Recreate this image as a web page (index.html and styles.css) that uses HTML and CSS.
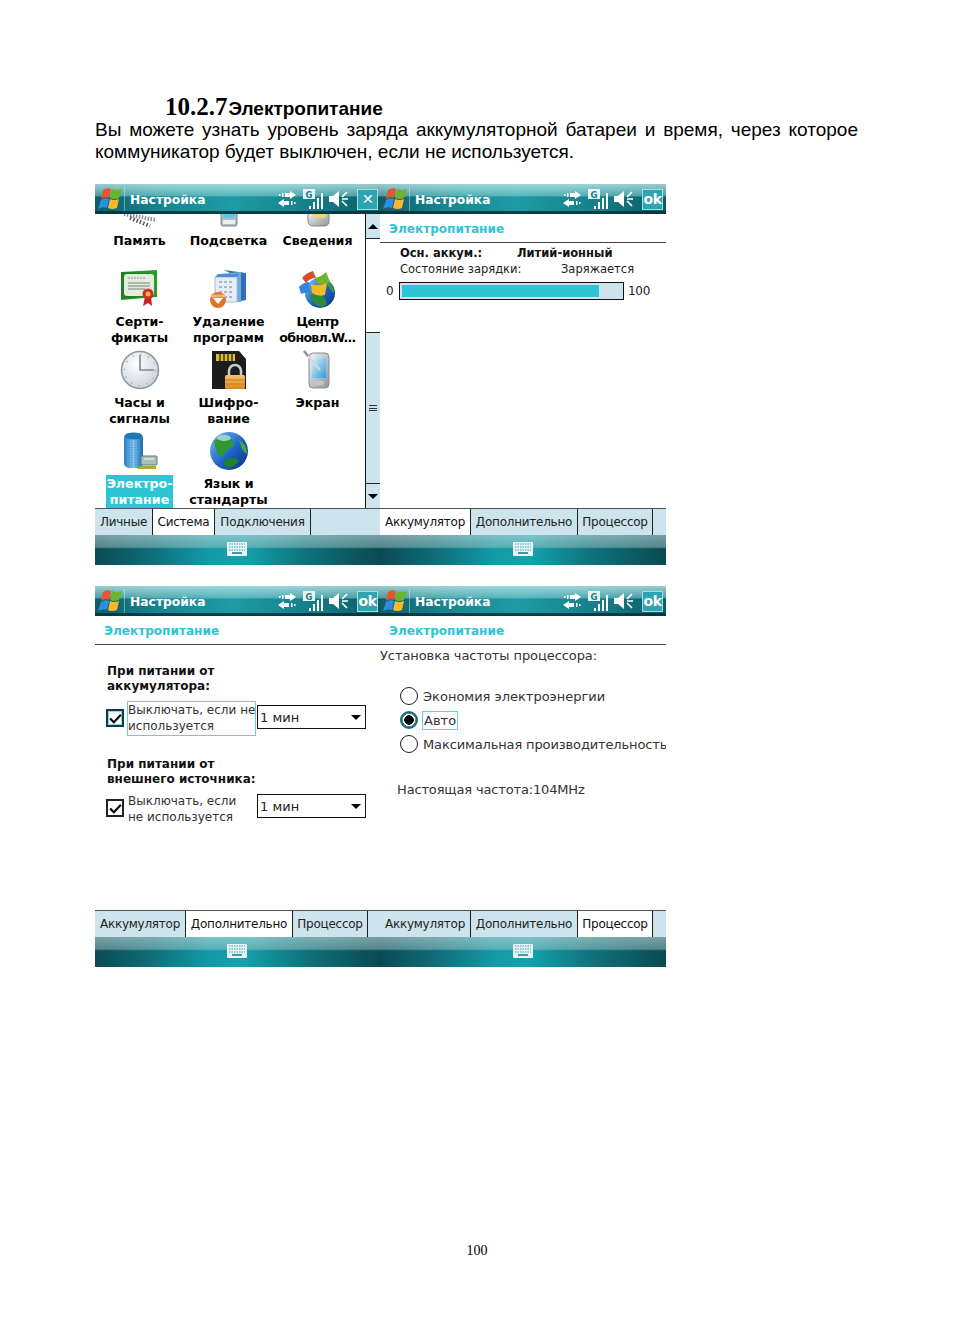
FILE: index.html
```html
<!DOCTYPE html>
<html lang="ru">
<head>
<meta charset="utf-8">
<title>Электропитание</title>
<link rel="stylesheet" href="styles.css">
</head>
<body>
<svg class="defs" aria-hidden="true">
  <defs>
    <linearGradient id="gGlobe" x1="0" y1="0" x2="1" y2="1"><stop offset="0" stop-color="#7cc0f0"/><stop offset=".55" stop-color="#1c62c4"/><stop offset="1" stop-color="#0b2e78"/></linearGradient>
    <linearGradient id="gMetal" x1="0" y1="0" x2="1" y2="1"><stop offset="0" stop-color="#f4f4f4"/><stop offset="1" stop-color="#8f959b"/></linearGradient>
    <linearGradient id="gBlue" x1="0" y1="0" x2="1" y2="0"><stop offset="0" stop-color="#2f7fc9"/><stop offset=".5" stop-color="#7fc6f2"/><stop offset="1" stop-color="#1e68ae"/></linearGradient>
    <linearGradient id="gLock" x1="0" y1="0" x2="0" y2="1"><stop offset="0" stop-color="#f6c46a"/><stop offset="1" stop-color="#de8420"/></linearGradient>
    <linearGradient id="gScreen" x1="0" y1="0" x2="1" y2="1"><stop offset="0" stop-color="#d9f3ff"/><stop offset="1" stop-color="#2f9ae0"/></linearGradient>
    <radialGradient id="gClock" cx=".4" cy=".35" r=".8"><stop offset="0" stop-color="#ffffff"/><stop offset="1" stop-color="#c2cbd3"/></radialGradient>

    <symbol id="i-win" viewBox="0 0 24 24">
      <path d="M5 3Q9 0 13 2L11 11Q7 9 3 12Z" fill="#e8552a"/>
      <path d="M14 2Q18 4 24 2L21 11Q16 13 12 11Z" fill="#6ab42e"/>
      <path d="M3 13Q7 10 11 12L9 21Q5 19 0 22Z" fill="#2a8fe0"/>
      <path d="M12 12Q16 14 21 12L19 21Q14 23 10 21Z" fill="#f7b92b"/>
    </symbol>
    <symbol id="i-sync" viewBox="0 0 18 16">
      <path d="M7 2H12V0L18 4 12 8V6H7Z" fill="#fff"/>
      <path d="M4 2H5.500V6H4ZM1 3H2.500V5H1Z" fill="#fff"/>
      <path d="M11 10H6V8L0 12 6 16V14H11Z" fill="#fff"/>
      <path d="M13 10H14.500V14H13ZM16 11H17.500V13H16Z" fill="#fff"/>
    </symbol>
    <symbol id="i-signal" viewBox="0 0 20 20">
      <rect x="0" y="0" width="12" height="10" fill="#e9f5f6"/>
      <text x="6" y="8.500" class="g-text">G</text>
      <path d="M6 17H8V20H6ZM10 13H12V20H10ZM14 9H16V20H14ZM18 4H20V20H18Z" fill="#fff"/>
    </symbol>
    <symbol id="i-speaker" viewBox="0 0 20 16">
      <path d="M0 5H4L10 0V16L4 11H0Z" fill="#fff"/>
      <path d="M18 1L13 6M13 8H19M18 15L13 10" stroke="#fff" stroke-width="1.700" fill="none"/>
    </symbol>
    <symbol id="i-kbd" viewBox="0 0 20 14">
      <rect width="20" height="14" rx="1" fill="#e8f6f7"/>
      <path d="M2 2H18M2 5H18M2 8H18" stroke="#3f9aa2" stroke-width="1" stroke-dasharray="1.500 1"/>
      <rect x="5" y="10" width="10" height="2" fill="#3f9aa2"/>
    </symbol>

    <symbol id="i-memory" viewBox="0 0 40 40">
      <path d="M4 26L36 32" stroke="#8d8d8d" stroke-width="4" stroke-dasharray="1.500 1.500"/>
      <path d="M10 30L30 38" stroke="#555" stroke-width="4" stroke-dasharray="1.500 2"/>
    </symbol>
    <symbol id="i-light" viewBox="0 0 40 40">
      <rect x="12" y="24" width="16" height="14" rx="2" fill="#b6bcc2" stroke="#7d858c"/>
      <rect x="14" y="24" width="12" height="6" fill="#5cc6ef"/>
      <rect x="14" y="32" width="12" height="4" fill="#eceff1"/>
    </symbol>
    <symbol id="i-info" viewBox="0 0 40 40">
      <path d="M10 24H31V33Q31 38 26 38H16Q10 38 10 33Z" fill="url(#gMetal)" stroke="#80878d"/>
      <path d="M15 24H28V29Q21 32 15 28Z" fill="#f1d76b"/>
    </symbol>
    <symbol id="i-cert" viewBox="0 0 40 40">
      <path d="M1 3L37 1V28L1 31Z" fill="#2e9a2e"/>
      <path d="M1 3L30 4V27L1 30Z" fill="#1f7f22"/>
      <rect x="4" y="5" width="30" height="22" rx="3" fill="#e6ecdd"/>
      <path d="M8 9H26" stroke="#a8b2a8" stroke-width="1.500" stroke-dasharray="2 1"/>
      <path d="M8 14H30M8 17H30M8 20H25" stroke="#9aa49c" stroke-width="1.400"/>
      <path d="M25 28L23 37 28 34 32 37 31 28Z" fill="#c81e24"/>
      <circle cx="28" cy="25" r="5.500" fill="#d8262a"/>
      <circle cx="28" cy="25" r="2.500" fill="#f3c53c"/>
    </symbol>
    <symbol id="i-uninstall" viewBox="0 0 40 40">
      <path d="M15 1L37 4V31L27 33V7Z" fill="#2f6fb8"/>
      <path d="M10 5L32 3V33L10 33Z" fill="#6fa9e0"/>
      <path d="M6 8H28V33H6Z" fill="#e6edf5" stroke="#a9bdd3"/>
      <path d="M6 8L9 5H30L28 8Z" fill="#4a8ed6"/>
      <path d="M10 13H24M10 18H24M10 23H24M10 28H24" stroke="#a8b9cc" stroke-width="2" stroke-dasharray="3 2"/>
      <circle cx="9" cy="31" r="8" fill="#e0742a"/>
      <path d="M2 27H16" stroke="#f6b078" stroke-width="3"/>
      <path d="M4 29H14L9 35Z" fill="#fff"/>
    </symbol>
    <symbol id="i-update" viewBox="0 0 40 40">
      <circle cx="22" cy="24" r="15" fill="url(#gGlobe)"/>
      <path d="M12 26Q20 20 26 28T24 38Q14 36 12 26Z" fill="#2c8a3a"/>
      <path d="M28 12Q36 14 36 24 32 22 28 12Z" fill="#38973f"/>
      <path d="M4 9Q8 4 15 2L18 9Q12 9 8 14Z" fill="#d84e24"/>
      <path d="M17 9Q23 8 28 3L32 13Q26 17 20 15Z" fill="#6eb52f"/>
      <path d="M1 18Q6 13 11 13L12 24Q7 23 3 25Z" fill="#2f86de"/>
      <path d="M13 15Q20 18 29 14L27 26Q20 28 14 24Z" fill="#f5b92a"/>
    </symbol>
    <symbol id="i-clock" viewBox="0 0 40 40">
      <circle cx="20" cy="20" r="18.500" fill="url(#gClock)" stroke="#8a949d" stroke-width="1.500"/>
      <circle cx="20" cy="20" r="15.500" fill="none" stroke="#96a1ab" stroke-width="1.500" stroke-dasharray="1 7.100"/>
      <path d="M20 5V20H34" stroke="#7c8790" stroke-width="1.600" fill="none"/>
    </symbol>
    <symbol id="i-sd" viewBox="0 0 40 40">
      <path d="M3 1H30L37 9V39H3Z" fill="#1c1c1c"/>
      <path d="M7 4H26V11H7Z" fill="#e4b92c"/>
      <path d="M11 4V11M15 4V11M19 4V11M23 4V11" stroke="#222" stroke-width="1.300"/>
      <path d="M20 26V21A6 6 0 0 1 32 21V26" fill="none" stroke="#c9cdd1" stroke-width="2.500"/>
      <rect x="16" y="25" width="20" height="14" rx="1.500" fill="url(#gLock)"/>
      <path d="M16 30H36M16 34H36" stroke="#c97a20" stroke-width="1"/>
    </symbol>
    <symbol id="i-screen" viewBox="0 0 40 40">
      <rect x="11" y="3" width="20" height="35" rx="4" fill="url(#gMetal)" stroke="#868d93"/>
      <rect x="14" y="8" width="14" height="20" fill="url(#gScreen)"/>
      <rect x="16" y="31" width="10" height="4" rx="1.500" fill="#c2c8cd"/>
      <path d="M6 1L22 20" stroke="#d4d8db" stroke-width="2.400"/>
      <path d="M6 1L10 6" stroke="#8d9398" stroke-width="2.400"/>
    </symbol>
    <symbol id="i-battery" viewBox="0 0 40 40">
      <rect x="4" y="2" width="19" height="35" rx="5" fill="url(#gBlue)"/>
      <ellipse cx="13.500" cy="5" rx="8.500" ry="3.500" fill="#1d78b8"/>
      <path d="M6 8V35M9 6V37M12 6V38M15 6V38M18 6V37M21 8V35" stroke="#0f5c9e" stroke-opacity=".45" stroke-dasharray="1 1.500"/>
      <rect x="21" y="25" width="16" height="9" rx="1" fill="#a8c0b8" stroke="#5d7b78"/>
      <path d="M24 28H34" stroke="#fff"/>
      <path d="M17 38L36 38 36 35 20 35Z" fill="#b7a23c"/>
    </symbol>
    <symbol id="i-globe" viewBox="0 0 40 40">
      <circle cx="20" cy="20" r="19" fill="url(#gGlobe)"/>
      <path d="M5 10Q14 3 20 7T24 16Q15 19 14 26 8 26 5 10Z" fill="#2f9a34"/>
      <path d="M30 9Q38 13 38 23 33 21 30 9Z" fill="#43a843"/>
      <path d="M15 29Q24 24 30 30 24 38 16 36Z" fill="#1f8230"/>
      <ellipse cx="15" cy="7" rx="7" ry="3" fill="#c7e8fb" fill-opacity=".7"/>
    </symbol>
  </defs>
</svg>

<main class="page">
  <h1 class="heading"><span class="heading-num">10.2.7</span><span class="heading-text">Электропитание</span></h1>
  <p class="intro">Вы можете узнать уровень заряда аккумуляторной батареи и время, через которое коммуникатор будет выключен, если не используется.</p>

  <section class="screens">
    <!-- Screen 1 -->
    <article class="screen">
      <header class="titlebar">
        <svg class="tb-win"><use href="#i-win"/></svg><span class="tb-title">Настройка</span>
        <svg class="tb-sync"><use href="#i-sync"/></svg><svg class="tb-signal"><use href="#i-signal"/></svg><svg class="tb-speaker"><use href="#i-speaker"/></svg>
        <span class="tb-btn tb-x">✕</span>
      </header>
      <div class="split">
        <div class="apps">
          <div class="app"><svg class="app-icon"><use href="#i-memory"/></svg><span class="app-label">Память</span></div>
          <div class="app"><svg class="app-icon"><use href="#i-light"/></svg><span class="app-label">Подсветка</span></div>
          <div class="app"><svg class="app-icon"><use href="#i-info"/></svg><span class="app-label">Сведения</span></div>
          <div class="app"><svg class="app-icon"><use href="#i-cert"/></svg><span class="app-label">Серти-<br>фикаты</span></div>
          <div class="app"><svg class="app-icon"><use href="#i-uninstall"/></svg><span class="app-label">Удаление<br>программ</span></div>
          <div class="app"><svg class="app-icon"><use href="#i-update"/></svg><span class="app-label app-label-tight">Центр<br>обновл.W...</span></div>
          <div class="app"><svg class="app-icon"><use href="#i-clock"/></svg><span class="app-label">Часы и<br>сигналы</span></div>
          <div class="app"><svg class="app-icon"><use href="#i-sd"/></svg><span class="app-label">Шифро-<br>вание</span></div>
          <div class="app"><svg class="app-icon"><use href="#i-screen"/></svg><span class="app-label">Экран</span></div>
          <div class="app"><svg class="app-icon"><use href="#i-battery"/></svg><span class="app-label app-label-on">Электро-<br>питание</span></div>
          <div class="app"><svg class="app-icon"><use href="#i-globe"/></svg><span class="app-label">Язык и<br>стандарты</span></div>
        </div>
        <div class="scrollbar">
          <span class="sb-btn"><span class="arrow-up"></span></span>
          <span class="sb-track"></span>
          <span class="sb-thumb"><span class="sb-grip"></span></span>
          <span class="sb-btn"><span class="arrow-down"></span></span>
        </div>
      </div>
      <nav class="tabs">
        <span class="tab tab-w58">Личные</span><span class="tab tab-w62 tab-on">Система</span><span class="tab tab-w96">Подключения</span>
      </nav>
      <footer class="softbar"><svg class="kbd"><use href="#i-kbd"/></svg></footer>
    </article>

    <!-- Screen 2 -->
    <article class="screen">
      <header class="titlebar">
        <svg class="tb-win"><use href="#i-win"/></svg><span class="tb-title">Настройка</span>
        <svg class="tb-sync"><use href="#i-sync"/></svg><svg class="tb-signal"><use href="#i-signal"/></svg><svg class="tb-speaker"><use href="#i-speaker"/></svg>
        <span class="tb-btn">ok</span>
      </header>
      <div class="pane">
        <h2 class="pane-head">Электропитание</h2>
        <dl class="bat-info">
          <dt class="bat-b">Осн. аккум.:</dt><dd class="bat-b">Литий-ионный</dd>
          <dt class="bat-k2">Состояние зарядки:</dt><dd class="bat-v2">Заряжается</dd>
        </dl>
        <div class="bat-row">
          <span class="bat-min">0</span>
          <span class="bat-bar"><span class="bat-fill"></span></span>
          <span class="bat-max">100</span>
        </div>
      </div>
      <nav class="tabs">
        <span class="tab tab-w91 tab-on">Аккумулятор</span><span class="tab tab-w107">Дополнительно</span><span class="tab tab-w75">Процессор</span>
      </nav>
      <footer class="softbar"><svg class="kbd"><use href="#i-kbd"/></svg></footer>
    </article>

    <!-- Screen 3 -->
    <article class="screen">
      <header class="titlebar">
        <svg class="tb-win"><use href="#i-win"/></svg><span class="tb-title">Настройка</span>
        <svg class="tb-sync"><use href="#i-sync"/></svg><svg class="tb-signal"><use href="#i-signal"/></svg><svg class="tb-speaker"><use href="#i-speaker"/></svg>
        <span class="tb-btn">ok</span>
      </header>
      <div class="pane">
        <h2 class="pane-head">Электропитание</h2>
        <h3 class="sec sec-a">При питании от<br>аккумулятора:</h3>
        <div class="opt opt-a">
          <span class="check check-on"><svg class="tick" viewBox="0 0 12 10"><path d="M1 5L4.500 8.500 11 1.500" fill="none" stroke="#000" stroke-width="2"/></svg></span>
          <span class="opt-text opt-focus">Выключать, если не<br>используется</span>
          <span class="select">1 мин<span class="arrow-down"></span></span>
        </div>
        <h3 class="sec sec-b">При питании от<br>внешнего источника:</h3>
        <div class="opt opt-b">
          <span class="check"><svg class="tick" viewBox="0 0 12 10"><path d="M1 5L4.500 8.500 11 1.500" fill="none" stroke="#000" stroke-width="2"/></svg></span>
          <span class="opt-text">Выключать, если<br>не используется</span>
          <span class="select">1 мин<span class="arrow-down"></span></span>
        </div>
      </div>
      <nav class="tabs">
        <span class="tab tab-w91">Аккумулятор</span><span class="tab tab-w107 tab-on">Дополнительно</span><span class="tab tab-w75">Процессор</span>
      </nav>
      <footer class="softbar"><svg class="kbd"><use href="#i-kbd"/></svg></footer>
    </article>

    <!-- Screen 4 -->
    <article class="screen">
      <header class="titlebar">
        <svg class="tb-win"><use href="#i-win"/></svg><span class="tb-title">Настройка</span>
        <svg class="tb-sync"><use href="#i-sync"/></svg><svg class="tb-signal"><use href="#i-signal"/></svg><svg class="tb-speaker"><use href="#i-speaker"/></svg>
        <span class="tb-btn">ok</span>
      </header>
      <div class="pane">
        <h2 class="pane-head">Электропитание</h2>
        <p class="cpu-title">Установка частоты процессора:</p>
        <ul class="radios">
          <li class="radio-row"><span class="radio"></span><span class="radio-text">Экономия электроэнергии</span></li>
          <li class="radio-row"><span class="radio radio-on"></span><span class="radio-text radio-focus">Авто</span></li>
          <li class="radio-row"><span class="radio"></span><span class="radio-text radio-long">Максимальная производительность</span></li>
        </ul>
        <p class="cpu-now">Настоящая частота:104MHz</p>
      </div>
      <nav class="tabs">
        <span class="tab tab-w91">Аккумулятор</span><span class="tab tab-w107">Дополнительно</span><span class="tab tab-w75 tab-on">Процессор</span>
      </nav>
      <footer class="softbar"><svg class="kbd"><use href="#i-kbd"/></svg></footer>
    </article>
  </section>

  <footer class="page-num">100</footer>
</main>
</body>
</html>
```
FILE: styles.css
```css
* { box-sizing: border-box; }
html, body { margin: 0; padding: 0; background: #fff; }
.defs { width: 0; height: 0; display: block; overflow: hidden; }

.page {
  height: 1339px;
  padding: 94px 96px 0 95px;
  color: #000;
  font-family: "Liberation Sans", Arial, sans-serif;
  display: flex;
  flex-direction: column;
  overflow: hidden;
}
.heading { margin: 0 0 0 70px; height: 25px; display: flex; align-items: baseline; line-height: 25px; }
.heading-num { font: bold 25px/25px "Liberation Serif", "Times New Roman", serif; }
.heading-text { font-size: 19px; font-weight: bold; margin-left: 1px; }
.intro {
  margin: 0;
  font-size: 19px;
  line-height: 22px;
  text-align: justify;
  height: 44px;
}

.screens {
  margin-top: 21px;
  display: grid;
  grid-template-columns: 285px 286px;
  grid-auto-rows: 381px;
  row-gap: 21px;
}
.screen {
  display: grid;
  grid-template-rows: 30px 294px 27px 30px;
  width: 100%;
  height: 381px;
  overflow: hidden;
  font-family: "DejaVu Sans", Verdana, sans-serif;
  font-size: 12px;
}

/* Title bar */
.titlebar {
  display: flex;
  align-items: center;
  position: relative;
  color: #fff;
  background:
    linear-gradient(180deg, rgba(190,232,234,.8) 0, rgba(130,205,210,.55) 40%, rgba(0,0,0,0) 43%, rgba(0,0,0,0) 90%, rgba(4,50,58,.85) 90%, rgba(4,50,58,.85) 100%),
    linear-gradient(90deg, #0e5c68 0, #17858f 22%, #1f9ba5 48%, #16808a 75%, #0c5a64 100%);
}
.tb-win { width: 26px; height: 24px; margin-left: 2px; flex: none; }
.tb-title {
  margin-left: 1px;
  padding-left: 5px;
  border-left: 1px solid rgba(210,240,240,.45);
  font-weight: bold;
  font-size: 12.300px;
  line-height: 26px;
  height: 24px;
  width: 150px;
  flex: none;
  white-space: nowrap;
}
.tb-sync { width: 18px; height: 16px; margin-left: 4px; flex: none; }
.tb-signal { width: 20px; height: 20px; margin: -1px 0 0 7px; flex: none; }
.tb-speaker { width: 20px; height: 16px; margin-left: 6px; flex: none; }
.tb-btn {
  width: 21px;
  height: 21px;
  margin-left: 8px;
  flex: none;
  background: #2fa3b0;
  border: 1px solid #9fe0e4;
  font: bold 14px/18px "DejaVu Sans", sans-serif;
  letter-spacing: -.5px;
  text-align: center;
}
.tb-x { font-size: 14px; }

/* Icons screen */
.split { display: grid; grid-template-columns: 270px 15px; min-height: 0; overflow: hidden; background: #fff; }
.apps {
  margin-top: -30px;
  display: grid;
  grid-template-columns: repeat(3, 89px);
  grid-auto-rows: 81px;
  justify-content: start;
  height: 324px;
}
.app { display: flex; flex-direction: column; align-items: center; padding-top: 4px; }
.app-icon { width: 40px; height: 40px; flex: none; margin-bottom: 4px; }
.app-label {
  font-weight: bold;
  font-size: 12.600px;
  line-height: 15.500px;
  text-align: center;
  white-space: nowrap;
  padding: 1px 1px 2px;
}
.app-label-tight { letter-spacing: -.7px; }
.app-label-on { background: #2dc5d6; color: #fff; }

.scrollbar { border-left: 1.500px solid #111; display: flex; flex-direction: column; }
.sb-btn {
  height: 24px;
  flex: none;
  background: #cde4ec;
  display: flex;
  align-items: center;
  justify-content: center;
}
.sb-track { height: 95px; background: #fff; border-top: 1px solid #222; border-bottom: 1px solid #222; flex: none; }
.sb-thumb { flex: 1; background: #cde4ec; border-bottom: 1px solid #222; display: flex; align-items: center; justify-content: center; }
.sb-grip { width: 8px; height: 6px; border-top: 1px solid #333; border-bottom: 1px solid #333; background: linear-gradient(#333,#333) 0 1.500px/100% 1px no-repeat; }
.arrow-up, .arrow-down { width: 0; height: 0; border-left: 5px solid transparent; border-right: 5px solid transparent; display: block; }
.arrow-up { border-bottom: 5px solid #000; }
.arrow-down { border-top: 5px solid #000; }

/* Tabs */
.tabs {
  display: flex;
  background: #cde4ec;
  border-top: 1px solid #4a5558;
  font-size: 12px;
  letter-spacing: -.25px;
}
.tab {
  height: 100%;
  flex: none;
  text-align: center;
  line-height: 27px;
  border-right: 1.500px solid #1b2326;
  white-space: nowrap;
  color: #222;
}
.tab-on { background: #fff; color: #111; }
.tab-w58 { width: 58px; }
.tab-w62 { width: 62px; }
.tab-w96 { width: 96px; }
.tab-w91 { width: 91px; }
.tab-w107 { width: 107px; }
.tab-w75 { width: 75px; }

/* Soft bar */
.softbar {
  display: flex;
  justify-content: center;
  padding-top: 7px;
  padding-right: 1px;
  background:
    linear-gradient(180deg, rgba(210,225,225,.55) 0, rgba(160,195,198,.5) 40%, rgba(0,0,0,0) 46%),
    linear-gradient(90deg, #0b4a54 0, #0e6a75 18%, #149aa6 40%, #16a2ad 52%, #0e7079 75%, #0a4a52 100%);
}
.kbd { width: 20px; height: 14px; }

/* Panes */
.pane { background: #fff; display: flow-root; overflow: hidden; }
.pane-head {
  margin: 0;
  height: 29px;
  border-bottom: 1.500px solid #3a4448;
  padding-left: 9px;
  font-size: 12.100px;
  font-weight: bold;
  line-height: 30px;
  color: #2dc5d6;
}

.bat-info {
  margin: 2px 0 0 20px;
  display: grid;
  grid-template-columns: 117px auto;
  grid-auto-rows: 16px;
  font-size: 11.500px;
  line-height: 16px;
}
.bat-info dt, .bat-info dd { margin: 0; color: #222; white-space: nowrap; }
.bat-info .bat-b { font-weight: bold; color: #111; }
.bat-k2 { grid-column: 1; width: 160px; }
.bat-info .bat-v2 { margin-left: 44px; }
.bat-row { margin-top: 5px; display: flex; align-items: center; height: 18px; padding-left: 6px; font-size: 12px; color: #222; }
.bat-min { width: 13px; flex: none; }
.bat-bar { width: 225px; height: 18px; flex: none; border: 1.500px solid #111; background: #cde4ec; padding: 2px; display: block; }
.bat-fill { display: block; width: 90%; height: 100%; background: #2dc5d6; }
.bat-max { margin-left: 4px; letter-spacing: -.3px; }

.sec { margin: 0 0 0 12px; font-size: 12px; line-height: 15px; font-weight: bold; color: #111; }
.sec-a { padding-top: 19px; }
.sec-b { padding-top: 21px; margin-left: 12px; }
.opt { display: flex; align-items: flex-start; margin-left: 11px; width: 260px; }
.opt-a { margin-top: 7px; height: 35px; }
.opt-b { margin-top: 5px; height: 35px; }
.check {
  width: 18px;
  height: 18px;
  flex: none;
  border: 2px solid #1d2529;
  display: flex;
  align-items: center;
  justify-content: center;
}
.opt-a .check { margin-top: 8px; }
.opt-b .check { margin-top: 7px; }
.check-on { border-color: #103a44; box-shadow: inset 0 0 0 1px #8fd9e2; }
.tick { width: 13px; height: 11px; }
.opt-text {
  margin-left: 3px;
  width: 129px;
  flex: none;
  height: 35px;
  border: 1px solid transparent;
  padding: 1px 0 0 0;
  font-size: 12px;
  line-height: 15.500px;
  color: #333;
  white-space: nowrap;
  overflow: hidden;
}
.opt-focus { border-color: #5cd4e0; }
.select {
  margin-left: 1px;
  width: 109px;
  height: 24px;
  flex: none;
  border: 1.500px solid #111;
  display: flex;
  align-items: center;
  justify-content: space-between;
  padding: 0 4px 0 2px;
  font-size: 13px;
  color: #222;
}
.opt-a .select { margin-top: 4px; }
.opt-b .select { margin-top: 2px; }

.cpu-title { margin: 3px 0 0; font-size: 13px; line-height: 16px; color: #333; white-space: nowrap; letter-spacing: -.08px; }
.radios { list-style: none; margin: 23px 0 0 20px; padding: 0; display: flex; flex-direction: column; gap: 6px; }
.radio-row { display: flex; align-items: center; height: 18px; font-size: 13px; color: #333; white-space: nowrap; }
.radio { width: 18px; height: 18px; flex: none; border: 1.500px solid #222; border-radius: 50%; background: #fff; margin-right: 5px; }
.radio-on { background: radial-gradient(circle, #000 0 4.500px, #fff 5px 6px, transparent 6.500px); border: 2px solid #0d6f7c; box-shadow: 0 0 0 .5px #222 inset; }
.radio-text { line-height: 17px; }
.radio-long { letter-spacing: -.13px; }
.radio-focus { border: 1px solid #5cd4e0; padding: 0 1px; height: 19px; margin-left: -1px; }
.cpu-now { margin: 29px 0 0 17px; font-size: 13px; line-height: 16px; color: #333; white-space: nowrap; letter-spacing: -.15px; }

.page-num {
  position: absolute;
  left: 0;
  right: 0;
  top: 1243px;
  text-align: center;
  font: 14px/16px "Liberation Serif", serif;
}
.g-text { font: bold 8.500px "DejaVu Sans", sans-serif; fill: #1b7d88; text-anchor: middle; }
```
